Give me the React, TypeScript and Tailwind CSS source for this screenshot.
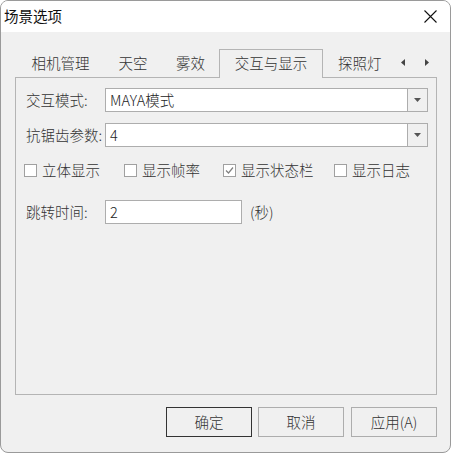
import React from 'react';

const font = {
  fontFamily: '"Noto Sans CJK SC", "Noto Sans", "Liberation Sans", sans-serif',
};

const tabs = [
  { label: '相机管理', width: 'w-[87px]' },
  { label: '天空', width: 'w-[58px]' },
  { label: '雾效', width: 'w-[57px]' },
];

const checks = [
  { label: '立体显示', checked: false, width: 'w-[100px]' },
  { label: '显示帧率', checked: false, width: 'w-[99px]' },
  { label: '显示状态栏', checked: true, width: 'w-[111px]' },
  { label: '显示日志', checked: false, width: 'w-[90px]' },
];

const ComboBox = ({ value }: { value: string }) => (
  <div className="flex h-[24px] w-[323px] border border-[#adadad] bg-white">
    <div className="flex-1 flex items-center pl-[4px] text-[#222]">{value}</div>
    <div className="w-[20px] flex items-center justify-center border-l border-[#adadad] bg-[#f0f0f0]">
      <svg width="7" height="4" viewBox="0 0 7 4">
        <polygon points="0,0 7,0 3.5,4" fill="#555" />
      </svg>
    </div>
  </div>
);

const CheckBox = ({ checked }: { checked: boolean }) => (
  <svg width="13" height="13" viewBox="0 0 13 13" className="shrink-0">
    <rect x="0.5" y="0.5" width="12" height="12" fill="#fff" stroke="#a0a0a0" />
    {checked && <polyline points="3,6.5 5.5,9 10,3.5" fill="none" stroke="#808080" strokeWidth="1.2" />}
  </svg>
);

export default function App() {
  return (
    <div className="w-[451px] h-[453px] bg-white text-[14.5px] font-light leading-none text-[#333]" style={font}>
      <div className="h-full rounded-[8px] border border-[#9a9a9a] bg-[#f0f0f0] overflow-hidden flex flex-col">
        <div className="h-[31px] bg-white flex items-center justify-between pl-[3px] pr-[13px] pb-[1px]">
          <span className="text-[#111] font-normal">场景选项</span>
          <svg width="13" height="13" viewBox="0 0 13 13">
            <path d="M0.5 0.5 L12.5 12.5 M12.5 0.5 L0.5 12.5" stroke="#111" strokeWidth="1.1" />
          </svg>
        </div>

        <div className="pl-[14px] pt-[17px]">
          <div className="flex items-end h-[28px]">
            <div className="w-[2px]" />
            {tabs.map((tab) => (
              <div key={tab.label} className={`${tab.width} h-[26px] flex items-center justify-center pb-[2px]`}>
                {tab.label}
              </div>
            ))}
            <div className="relative z-10 -mb-px w-[104px] h-[29px] flex items-center justify-center border border-b-0 border-[#b4b4b4] bg-[#f0f0f0] pb-[1px]">
              交互与显示
            </div>
            <div className="h-[26px] flex items-center pl-[15px] pr-[13px] pb-[2px]">探照灯</div>
            <div className="h-[26px] flex items-center gap-[20px] pl-[6px] pb-[4px]">
              <svg width="4" height="7" viewBox="0 0 4 7">
                <polygon points="4,0 4,7 0,3.5" fill="#444" />
              </svg>
              <svg width="4" height="7" viewBox="0 0 4 7">
                <polygon points="0,0 0,7 4,3.5" fill="#444" />
              </svg>
            </div>
          </div>

          <div className="w-[422px] h-[318px] border border-[#b4b4b4] pt-[10px] pl-[10px]">
            <div className="flex items-center">
              <span className="w-[79px] whitespace-nowrap">交互模式:</span>
              <ComboBox value="MAYA模式" />
            </div>
            <div className="flex items-center mt-[11px]">
              <span className="w-[79px] whitespace-nowrap">抗锯齿参数:</span>
              <ComboBox value="4" />
            </div>
            <div className="flex items-center h-[20px] mt-[13px] -ml-[2px]">
              {checks.map((c) => (
                <div key={c.label} className={`${c.width} flex items-center gap-[5px]`}>
                  <CheckBox checked={c.checked} />
                  <span>{c.label}</span>
                </div>
              ))}
            </div>
            <div className="flex items-center mt-[20px]">
              <span className="w-[79px] whitespace-nowrap">跳转时间:</span>
              <div className="w-[137px] h-[24px] flex items-center pl-[4px] border border-[#adadad] bg-white text-[#222]">
                2
              </div>
              <span className="ml-[8px]">(秒)</span>
            </div>
          </div>

          <div className="w-[422px] flex justify-end gap-[6px] mt-[12px]">
            <button className="w-[86px] h-[30px] border border-[#333] bg-[#f0f0f0]">确定</button>
            <button className="w-[86px] h-[30px] border border-[#adadad] bg-[#f0f0f0]">取消</button>
            <button className="w-[86px] h-[30px] border border-[#adadad] bg-[#f0f0f0] ml-px">应用(A)</button>
          </div>
        </div>
      </div>
    </div>
  );
}
